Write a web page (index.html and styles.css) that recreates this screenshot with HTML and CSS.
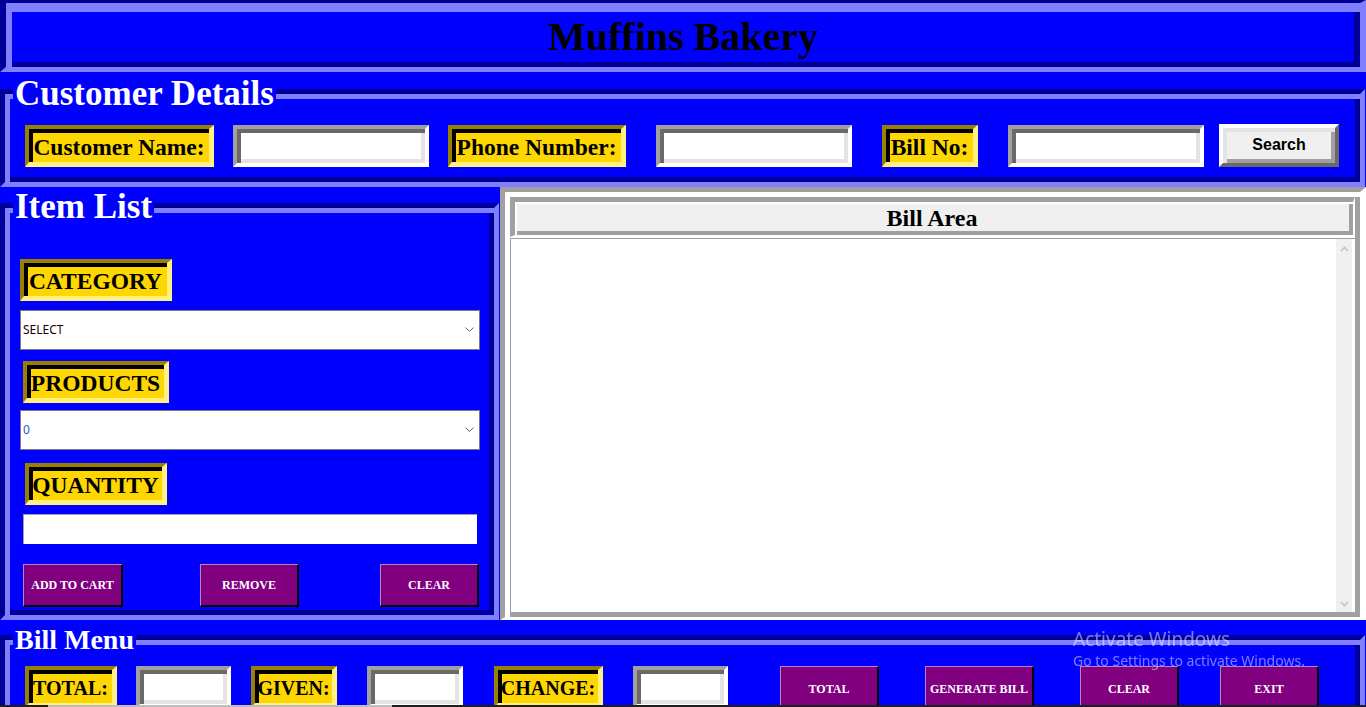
FILE: index.html
```html
<!DOCTYPE html>
<html lang="en">
<head>
<meta charset="utf-8">
<title>Muffins Bakery</title>
<link rel="stylesheet" href="styles.css">
</head>
<body>
<div class="screen">
  <header class="hdr"><h1 class="hdr-title">Muffins Bakery</h1></header>

  <section class="sec sec-cust">
    <div class="lf-title t-cust">Customer Details</div>
    <div class="lf lf-cust">
      <div class="cust-row">
        <div class="tag tag-lg w-cname">Customer Name:</div>
        <div class="entry e-cust ml-19"></div>
        <div class="tag tag-lg w-phone ml-19">Phone Number:</div>
        <div class="entry e-cust ml-30"></div>
        <div class="tag tag-lg w-bill ml-30">Bill No:</div>
        <div class="entry e-cust ml-30"></div>
        <button class="btn-search">Search</button>
      </div>
    </div>
  </section>

  <div class="mid">
    <section class="sec sec-items">
      <div class="lf-title t-items">Item List</div>
      <div class="lf lf-items">
        <div class="items-col">
          <div class="tag tag-lg w-cat">CATEGORY</div>
          <div class="combo combo-cat">
            <span class="combo-val">SELECT</span>
            <svg class="chev" width="9" height="5" viewBox="0 0 9 5"><path d="M0.5 0.5 L4.5 4.5 L8.5 0.5" fill="none" stroke="#606060" stroke-width="1"/></svg>
          </div>
          <div class="tag tag-lg w-prod">PRODUCTS</div>
          <div class="combo combo-prod">
            <span class="combo-val val-blue">0</span>
            <svg class="chev" width="9" height="5" viewBox="0 0 9 5"><path d="M0.5 0.5 L4.5 4.5 L8.5 0.5" fill="none" stroke="#606060" stroke-width="1"/></svg>
          </div>
          <div class="tag tag-lg w-qty">QUANTITY</div>
          <div class="qty-entry"></div>
          <div class="item-btns">
            <button class="pbtn w-add">ADD TO CART</button>
            <button class="pbtn w-rem">REMOVE</button>
            <button class="pbtn w-clr">CLEAR</button>
          </div>
        </div>
      </div>
    </section>

    <section class="bill">
      <div class="bill-label">Bill Area</div>
      <div class="bill-text">
        <div class="bill-body"></div>
        <div class="vscroll">
          <svg width="9" height="6" viewBox="0 0 9 6"><path d="M1 5 L4.5 1.5 L8 5" fill="none" stroke="#c2c2c2" stroke-width="1.6"/></svg>
          <svg width="9" height="6" viewBox="0 0 9 6"><path d="M1 1 L4.5 4.5 L8 1" fill="none" stroke="#c2c2c2" stroke-width="1.6"/></svg>
        </div>
      </div>
    </section>
  </div>

  <section class="sec sec-menu">
    <div class="lf-title t-menu">Bill Menu</div>
    <div class="lf lf-menu">
      <div class="menu-row">
        <div class="tag tag-sm w-total">TOTAL:</div>
        <div class="entry e-menu ml-19"></div>
        <div class="tag tag-sm w-given ml-20">GIVEN:</div>
        <div class="entry e-menu2 ml-30"></div>
        <div class="tag tag-sm w-change ml-31">CHANGE:</div>
        <div class="entry e-menu ml-30"></div>
        <button class="pbtn mbtn w-99 ml-52">TOTAL</button>
        <button class="pbtn mbtn w-109 ml-46">GENERATE BILL</button>
        <button class="pbtn mbtn w-99 ml-46">CLEAR</button>
        <button class="pbtn mbtn w-99 ml-41">EXIT</button>
      </div>
    </div>
  </section>
</div>

<div class="watermark">
  <div class="wm-1">Activate Windows</div>
  <div class="wm-2">Go to Settings to activate Windows.</div>
</div>
<div class="taskbar"><div class="tb-seg"></div></div>
</body>
</html>
```

FILE: styles.css
```css
html, body {
  margin: 0;
  padding: 0;
}
body {
  width: 1366px;
  height: 707px;
  overflow: hidden;
  background: #0000ff;
  font-family: "Liberation Serif", "Times New Roman", serif;
}
.screen {
  width: 1366px;
  display: flex;
  flex-direction: column;
}

/* Header */
.hdr {
  box-sizing: border-box;
  height: 72px;
  border-style: solid;
  border-width: 3px 6px 5px 6px;
  border-color: #000099 #8080ff #8080ff #000099;
  box-shadow: inset 6px 9px 0 #8080ff, inset -6px -5px 0 #000099;
  padding: 9px 6px 5px 6px;
  display: flex;
  align-items: center;
  justify-content: center;
}
.hdr-title {
  margin: 0;
  font-size: 40px;
  line-height: 50px;
  font-weight: bold;
  color: #000;
}

/* Label frames */
.sec {
  position: relative;
  box-sizing: border-box;
}
.lf {
  box-sizing: border-box;
  border-style: solid;
  border-width: 5px;
  border-color: #000099 #8080ff #8080ff #000099;
  box-shadow: inset 5px 5px 0 #8080ff, inset -5px -5px 0 #000099;
  padding: 5px;
}
.lf-title {
  position: absolute;
  left: 13px;
  padding: 0 2px;
  background: #0000ff;
  color: #fff;
  font-weight: bold;
  font-size: 35px;
  line-height: 40px;
  white-space: nowrap;
}
.t-cust { top: 2px; }
.t-items { top: 0; }
.t-menu { top: 4px; font-size: 28px; line-height: 32px; }

/* Customer details */
.sec-cust {
  height: 115px;
  width: 1366px;
  padding-top: 17px;
}
.lf-cust {
  width: 1365px;
  height: 98px;
}
.cust-row {
  display: flex;
  align-items: flex-start;
  margin-top: 26px;
  padding-left: 15px;
}

/* Yellow sunken tags */
.tag {
  box-sizing: border-box;
  height: 42px;
  background: #ffd700;
  border-style: solid;
  border-width: 4px 5px 5px 4px;
  border-color: #9a8000 #fff080 #fff080 #9a8000;
  box-shadow: inset 4px 4px 0 #000;
  color: #000;
  font-weight: bold;
  display: flex;
  align-items: center;
  justify-content: center;
  white-space: nowrap;
  padding: 4px 0 2px 0;
}
.tag-lg { font-size: 23.5px; line-height: 26px; }
.tag-sm { font-size: 20px; line-height: 22px; }
.w-cname { width: 189px; }
.w-phone { width: 178px; }
.w-bill { width: 96px; }
.w-cat { width: 152px; }
.w-prod { width: 146px; }
.w-qty { width: 142px; }
.w-total { width: 92px; }
.w-given { width: 86px; }
.w-change { width: 109px; }

/* Sunken entries */
.entry {
  box-sizing: border-box;
  height: 42px;
  background: #fff;
  border-style: solid;
  border-width: 4px;
  border-color: #a0a0a0 #fff #fff #a0a0a0;
  box-shadow: inset 4px 4px 0 #696969, inset -4px -4px 0 #e3e3e3;
}
.e-cust { width: 196px; }
.e-menu { width: 95px; }
.e-menu2 { width: 96px; }

.ml-19 { margin-left: 19px; }
.ml-20 { margin-left: 20px; }
.ml-30 { margin-left: 30px; }
.ml-31 { margin-left: 31px; }
.ml-41 { margin-left: 41px; }
.ml-46 { margin-left: 46px; }
.ml-52 { margin-left: 52px; }

.btn-search {
  box-sizing: border-box;
  width: 120px;
  height: 43px;
  margin-top: -1px;
  margin-left: 15px;
  background: #f0f0f0;
  border-style: solid;
  border-width: 4px;
  border-color: #fff #696969 #696969 #fff;
  box-shadow: inset 4px 4px 0 #e3e3e3, inset -4px -4px 0 #a0a0a0;
  font-family: "Liberation Sans", Arial, sans-serif;
  font-weight: bold;
  font-size: 16px;
  color: #000;
  padding: 0 0 2px 0;
}

/* Middle */
.mid {
  display: flex;
  gap: 1px;
  height: 433px;
}
.sec-items {
  width: 499px;
  height: 433px;
  padding-top: 16px;
}
.lf-items {
  width: 499px;
  height: 417px;
}
.items-col {
  display: flex;
  flex-direction: column;
  align-items: flex-start;
  padding-top: 46px;
}
.items-col .w-cat { margin-left: 10px; }
.combo {
  box-sizing: border-box;
  width: 460px;
  height: 40px;
  margin-left: 10px;
  background: #fff;
  border: 1px solid #7a7a7a;
  display: flex;
  align-items: center;
  justify-content: space-between;
  padding: 0 5px 1px 2px;
  font-family: "Noto Sans", "Open Sans", sans-serif;
  font-size: 12px;
}
.combo-val { color: #1a0000; }
.val-blue { color: #1e5fc0; }
.chev { display: block; }
.combo-cat { margin-top: 9px; }
.items-col .w-prod { margin-top: 11px; margin-left: 13px; }
.combo-prod { margin-top: 7px; }
.items-col .w-qty { margin-top: 13px; margin-left: 15px; }
.qty-entry {
  box-sizing: border-box;
  width: 454px;
  height: 30px;
  margin-top: 9px;
  margin-left: 13px;
  background: #fff;
  border-top: 1px solid #a0a0a0;
  border-left: 1px solid #a0a0a0;
}
.item-btns {
  display: flex;
  margin-top: 20px;
  margin-left: 13px;
}
.pbtn {
  box-sizing: border-box;
  height: 43px;
  background: #800080;
  color: #fff;
  border-style: solid;
  border-width: 1px 2px 2px 1px;
  border-color: #c080c0 #000 #000 #c080c0;
  font-family: "Liberation Serif", "Times New Roman", serif;
  font-weight: bold;
  font-size: 12px;
  padding: 1px 0 0 0;
  white-space: nowrap;
}
.w-add { width: 100px; }
.w-rem { width: 99px; margin-left: 77px; }
.w-clr { width: 99px; margin-left: 81px; }
.w-99 { width: 99px; }
.w-109 { width: 109px; }
.mbtn { height: 44px; padding-top: 3px; }

/* Bill area */
.bill {
  box-sizing: border-box;
  width: 866px;
  height: 433px;
  background: #fff;
  border-style: solid;
  border-width: 5px 6px 3px 5px;
  border-color: #a0a0a0 #fff #fff #a0a0a0;
  box-shadow: inset 5px 5px 0 #fff, inset -5px -5px 0 #a0a0a0;
  padding: 5px;
  display: flex;
  flex-direction: column;
}
.bill-label {
  box-sizing: border-box;
  height: 40px;
  background: #f0f0f0;
  border-style: solid;
  border-width: 5px 2px 2px 5px;
  border-color: #a0a0a0 #fff #fff #a0a0a0;
  box-shadow: inset 2px 2px 0 #fff, inset -4px -4px 0 #a0a0a0;
  font-weight: bold;
  font-size: 24px;
  line-height: 26px;
  display: flex;
  align-items: center;
  justify-content: center;
  padding: 2px 4px 4px 0;
}
.bill-text {
  margin-top: 1px;
  height: 374px;
  box-sizing: border-box;
  border-top: 1px solid #a0a0a0;
  border-left: 1px solid #a0a0a0;
  display: flex;
}
.bill-body {
  flex: 1;
  background: #fff;
}
.vscroll {
  width: 16px;
  margin-right: 3px;
  background: #f0f0f0;
  display: flex;
  flex-direction: column;
  justify-content: space-between;
  align-items: center;
  padding: 7px 0 5px 0;
}
.vscroll svg { display: block; }

/* Bill menu */
.sec-menu {
  width: 1366px;
  height: 110px;
  padding-top: 15px;
  flex: none;
}
.lf-menu {
  width: 1365px;
  height: 100px;
}
.menu-row {
  display: flex;
  align-items: flex-start;
  margin-top: 21px;
  padding-left: 15px;
}

/* Overlays */
.watermark {
  position: fixed;
  left: 1073px;
  top: 626px;
  font-family: "Noto Sans", "Open Sans", sans-serif;
  color: rgba(255, 255, 255, 0.48);
  pointer-events: none;
}
.wm-1 {
  font-size: 19px;
  line-height: 26px;
}
.wm-2 {
  font-size: 14px;
  line-height: 18px;
}
.taskbar {
  position: fixed;
  left: 0;
  bottom: 0;
  width: 1366px;
  height: 2px;
  background: #1e1e1e;
}
.tb-seg {
  margin-left: 48px;
  width: 344px;
  height: 2px;
  background: #bdbdbd;
}
```
